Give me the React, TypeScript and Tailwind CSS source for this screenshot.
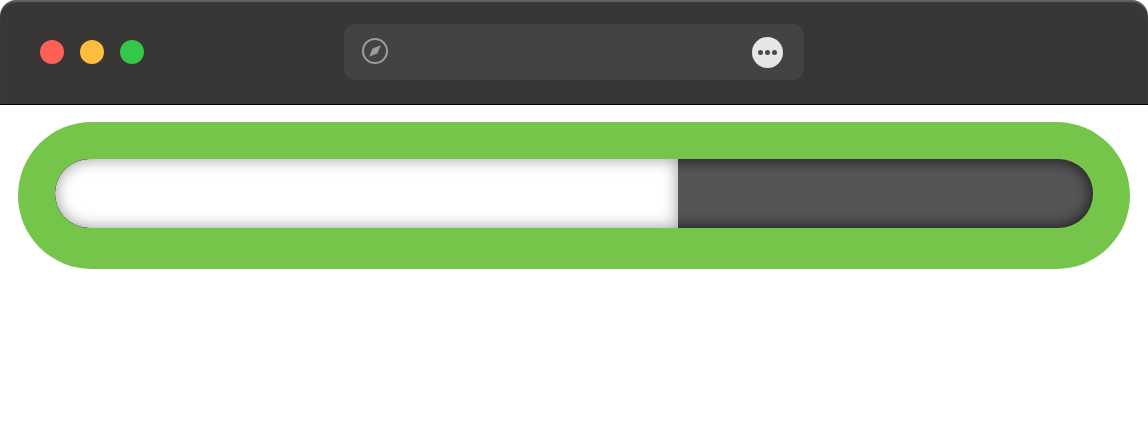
const Dot = ({ color }: { color: string }) => <span className={`block h-6 w-6 rounded-full ${color}`} />

export default function App() {
    return (
        <div className="h-[448px] w-[1148px] bg-white">
            <header className="flex h-[105px] items-center rounded-t-[16px] border-b border-black bg-[#383735] pl-10 shadow-[inset_0_2px_1px_rgba(255,255,255,0.22)]">
                <div className="flex w-[304px] gap-4">
                    <Dot color="bg-[#ff5f56]" />
                    <Dot color="bg-[#ffbd3e]" />
                    <Dot color="bg-[#34c749]" />
                </div>
                <div className="flex h-14 w-[460px] items-center justify-between rounded-xl bg-[#444341] pl-[18px] pr-[21px]">
                    <svg className="-translate-y-px" width="26" height="26" viewBox="0 0 26 26" fill="none">
                        <circle cx="13" cy="13" r="12" stroke="#9c9c9a" strokeWidth="2" />
                        <path d="M18.8 7.2 15.4 15.4 7.2 18.8 10.6 10.6Z" fill="#9c9c9a" />
                    </svg>
                    <span className="flex h-[31px] w-[31px] items-center justify-center gap-[2px] rounded-full bg-[#e6e6e6]">
                        <span className="h-[5px] w-[5px] rounded-full bg-[#4a4a48]" />
                        <span className="h-[5px] w-[5px] rounded-full bg-[#4a4a48]" />
                        <span className="h-[5px] w-[5px] rounded-full bg-[#4a4a48]" />
                    </span>
                </div>
            </header>
            <main className="px-[18px] pt-[17px]">
                <div className="h-[147px] rounded-full bg-[#75c54b] p-[37px]">
                    <div className="h-[69px] overflow-hidden rounded-full bg-[#555555] shadow-[inset_0_0_16px_rgba(0,0,0,0.8)]">
                        <div className="h-full w-[60%] rounded-l-full bg-white shadow-[inset_0_0_16px_rgba(0,0,0,0.4)]" />
                    </div>
                </div>
            </main>
        </div>
    )
}
